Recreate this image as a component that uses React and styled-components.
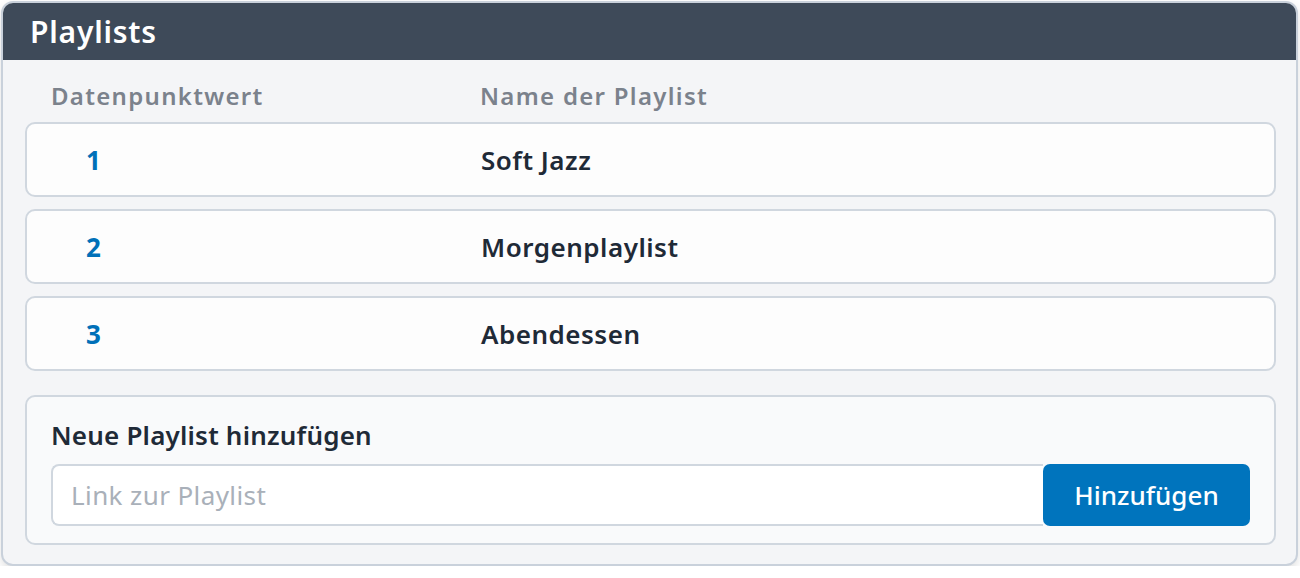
import styled, { createGlobalStyle } from "styled-components";

const GlobalStyle = createGlobalStyle`
  body {
    margin: 0;
    background: #ffffff;
    font-family: "Noto Sans", "Open Sans", sans-serif;
  }
`;

const Card = styled.div`
  margin: 1px 2px 0 1px;
  height: 565px;
  box-sizing: border-box;
  border: 2px solid #c9d1db;
  border-radius: 12px;
  background: #f4f5f7;
  overflow: hidden;
  box-shadow: 0 4px 8px rgba(0, 0, 0, 0.12);
  display: flex;
  flex-direction: column;
`;

const Header = styled.div`
  height: 57px;
  background: #3e4a59;
  display: flex;
  align-items: center;
  padding: 0 27px;
`;

const Title = styled.h1`
  margin: 0;
  color: #ffffff;
  font-size: 30px;
  font-weight: 600;
  letter-spacing: 0.8px;
`;

const Body = styled.div`
  padding: 18px 20px 0 22px;
  display: flex;
  flex-direction: column;
`;

const Columns = styled.div`
  display: grid;
  grid-template-columns: 429px 1fr;
  padding: 0 26px 10px 26px;
  height: 44px;
  box-sizing: border-box;
  align-items: center;
  color: #7b828c;
  font-size: 24px;
  font-weight: 600;
  letter-spacing: 1.3px;
`;

const List = styled.div`
  display: flex;
  flex-direction: column;
  gap: 12px;
`;

const Row = styled.div`
  display: grid;
  grid-template-columns: 428px 1fr;
  align-items: center;
  height: 75px;
  box-sizing: border-box;
  padding: 0 26px;
  border: 2px solid #d0d7df;
  border-radius: 10px;
  background: #fdfdfd;
`;

const Value = styled.span`
  padding-left: 33px;
  color: #0070b8;
  font-size: 26px;
  font-weight: 700;
`;

const Name = styled.span`
  color: #1f2a37;
  font-size: 26px;
  font-weight: 600;
  letter-spacing: 0.5px;
`;

const AddBox = styled.div`
  margin-top: 24px;
  height: 150px;
  box-sizing: border-box;
  border: 2px solid #d0d7df;
  border-radius: 10px;
  background: #f9fafb;
  padding: 22px 24px 0 24px;
`;

const AddTitle = styled.h2`
  margin: 0 0 13px 0;
  color: #1f2a37;
  font-size: 26px;
  font-weight: 600;
  letter-spacing: 0.2px;
  line-height: 32px;
`;

const InputRow = styled.div`
  display: flex;
  height: 62px;
`;

const Input = styled.input`
  flex: 1;
  min-width: 0;
  box-sizing: border-box;
  border: 2px solid #d0d7df;
  border-right: none;
  border-radius: 8px 0 0 8px;
  background: #ffffff;
  padding: 0 18px;
  font-family: inherit;
  font-size: 26px;
  letter-spacing: 0.4px;
  color: #1f2a37;
  outline: none;

  &::placeholder {
    color: #a9b0b9;
  }
`;

const Button = styled.button`
  width: 207px;
  border: none;
  border-radius: 7px;
  background: #0074bd;
  color: #ffffff;
  font-family: inherit;
  font-size: 26px;
  font-weight: 500;
  cursor: pointer;
`;

const playlists = [
  { id: 1, name: "Soft Jazz" },
  { id: 2, name: "Morgenplaylist" },
  { id: 3, name: "Abendessen" },
];

const App = () => {
  return (
    <>
      <GlobalStyle />
      <Card>
        <Header>
          <Title>Playlists</Title>
        </Header>
        <Body>
          <Columns>
            <span>Datenpunktwert</span>
            <span>Name der Playlist</span>
          </Columns>
          <List>
            {playlists.map((item) => (
              <Row key={item.id}>
                <Value>{item.id}</Value>
                <Name>{item.name}</Name>
              </Row>
            ))}
          </List>
          <AddBox>
            <AddTitle>Neue Playlist hinzufügen</AddTitle>
            <InputRow>
              <Input placeholder="Link zur Playlist" />
              <Button>Hinzufügen</Button>
            </InputRow>
          </AddBox>
        </Body>
      </Card>
    </>
  );
};

export default App;
